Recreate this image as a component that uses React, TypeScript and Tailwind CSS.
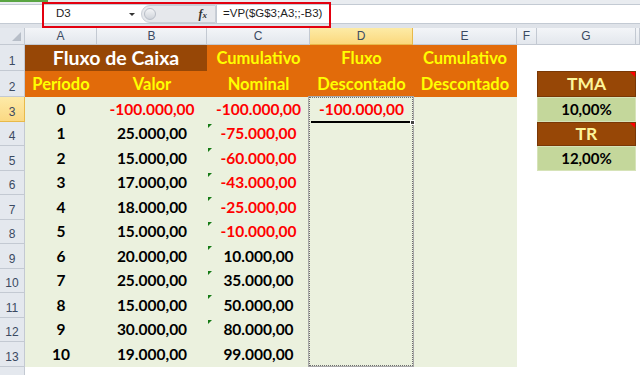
import React from "react";

const RED = "text-[#ff0000]";
const BLK = "text-[#000000]";

const bVals: [string, boolean][] = [
  ["-100.000,00", true],
  ["25.000,00", false],
  ["15.000,00", false],
  ["17.000,00", false],
  ["18.000,00", false],
  ["15.000,00", false],
  ["20.000,00", false],
  ["25.000,00", false],
  ["15.000,00", false],
  ["30.000,00", false],
  ["19.000,00", false],
];
const cVals: [string, boolean][] = [
  ["-100.000,00", true],
  ["-75.000,00", true],
  ["-60.000,00", true],
  ["-43.000,00", true],
  ["-25.000,00", true],
  ["-10.000,00", true],
  ["10.000,00", false],
  ["35.000,00", false],
  ["50.000,00", false],
  ["80.000,00", false],
  ["99.000,00", false],
];

const GRID =
  "grid grid-cols-[25px_72px_110px_103px_103px_104px_20px_99px_1fr] grid-rows-[17px_26px_26px_repeat(11,24.5px)_20px]";

const rowHead =
  "flex items-end justify-center pb-[3px] bg-[#e4e8ee] border-r border-b border-[#c3c9d2] text-[12px] leading-none text-[#3b4a62] font-['Liberation_Sans',Arial,sans-serif]";
const rowHeadSel =
  "flex items-end justify-center pb-[3px] bg-gradient-to-b from-[#fdeaa8] to-[#fbd983] border-r border-b border-[#e8b94a] text-[12px] leading-none text-[#3b4a62] font-['Liberation_Sans',Arial,sans-serif]";
const colHead =
  "flex items-center justify-center bg-gradient-to-b from-[#f3f5f8] to-[#e3e7ed] border-r border-b border-[#c3c9d2] text-[12px] leading-none text-[#3b4a62] font-['Liberation_Sans',Arial,sans-serif]";
const colHeadSel =
  "flex items-center justify-center bg-gradient-to-b from-[#fdeba6] to-[#fbd87c] border-r border-b border-[#e8b94a] text-[12px] leading-none text-[#3b4a62] font-['Liberation_Sans',Arial,sans-serif]";

const dataCell =
  "relative flex items-center justify-center bg-[#ebf1de] text-[15.5px] font-bold";
const hdr =
  "flex items-center justify-center bg-[#e26b0a] text-[#ffff00] text-[16.5px] font-bold";

function GreenMark() {
  return (
    <span className="absolute left-[1px] top-[2px] w-0 h-0 border-t-[4px] border-r-[4px] border-t-[#157a15] border-r-transparent" />
  );
}

function RedMark() {
  return (
    <span className="absolute right-0 top-0 w-0 h-0 border-t-[5px] border-l-[5px] border-t-[#ff0000] border-l-transparent" />
  );
}

export default function App() {
  const rows = [];
  for (let i = 0; i < 11; i++) {
    const r = i + 3;
    const sel = r === 3;
    rows.push(
      <React.Fragment key={r}>
        <div className={sel ? rowHeadSel : rowHead}>{r}</div>
        <div className={`${dataCell} ${BLK}`}>{i}</div>
        <div className={`${dataCell} ${bVals[i][1] ? RED : BLK}`}>{bVals[i][0]}</div>
        <div className={`${dataCell} ${cVals[i][1] ? RED : BLK}`}>
          {i >= 1 && i <= 9 ? <GreenMark /> : null}
          {cVals[i][0]}
        </div>
        <div className={`${dataCell} ${RED}`}>{sel ? "-100.000,00" : ""}</div>
        <div className={dataCell}></div>
        <div className="bg-white"></div>
        {r === 3 ? (
          <div className="flex items-center justify-center bg-[#c4d79b] border border-[#d6e3b8] text-[15px] font-bold text-black">
            10,00%
          </div>
        ) : r === 4 ? (
          <div className="relative flex items-center justify-center bg-[#974706] border border-[#7a3805] text-[17.5px] font-bold text-[#fdf59a]">
            <RedMark />
            TR
          </div>
        ) : r === 5 ? (
          <div className="flex items-center justify-center bg-[#c4d79b] border border-[#d6e3b8] text-[15px] font-bold text-black">
            12,00%
          </div>
        ) : (
          <div className="bg-white"></div>
        )}
        <div className="bg-white"></div>
      </React.Fragment>
    );
  }

  return (
    <div className="relative w-[640px] h-[375px] overflow-hidden bg-white font-['Lato','Open_Sans',sans-serif]">
      {/* formula bar */}
      <div className="h-[28px] flex flex-col bg-[#dfe3e9]">
        <div className="h-[2px] flex bg-[#e9ecf0]">
          <div className="w-[48px] bg-[#5aa543]" />
        </div>
        <div className="h-[2px] bg-[#e9ecf0]" />
        <div className="h-[20px] flex bg-white border-t border-b border-[#c3cad3] font-['Liberation_Sans',Arial,sans-serif] text-[11.5px] text-[#1e1e1e]">
          <div className="w-[141px] flex items-center pl-[56px] pr-[6px]">
            <span className="flex-1">D3</span>
            <span className="w-0 h-0 border-l-[3px] border-r-[3px] border-t-[3px] border-l-transparent border-r-transparent border-t-[#333]" />
          </div>
          <div className="w-[75px] flex items-center bg-[#e6e8ec] rounded-l-full border border-[#c9ced6] pl-[2px] pr-[8px]">
            <span className="w-[12px] h-[12px] rounded-full bg-gradient-to-b from-[#f4f5f7] to-[#cfd3da] border border-[#b8bec7]" />
            <span className="flex-1" />
            <span className="font-['Liberation_Serif',serif] italic font-bold text-[12px] text-[#333]">
              f<span className="text-[9px]">x</span>
            </span>
          </div>
          <div className="flex-1 flex items-center pl-[6px] border-l border-[#c3cad3]">
            =VP($G$3;A3;;-B3)
          </div>
        </div>
        <div className="flex-1" />
      </div>

      {/* sheet: cells grid and overlay grid stacked in one area */}
      <div className="grid">
        <div className={`${GRID} col-start-1 row-start-1`}>
          {/* column headers */}
          <div className="relative bg-[#e4e8ee] border-r border-b border-[#c3c9d2]">
            <span className="absolute right-[3px] bottom-[3px] w-0 h-0 border-b-[9px] border-l-[9px] border-b-[#b7bec8] border-l-transparent" />
          </div>
          <div className={colHead}>A</div>
          <div className={colHead}>B</div>
          <div className={colHead}>C</div>
          <div className={colHeadSel}>D</div>
          <div className={colHead}>E</div>
          <div className={colHead}>F</div>
          <div className={colHead}>G</div>
          <div className={colHead}></div>

          {/* row 1 */}
          <div className={rowHead}>1</div>
          <div className="col-span-2 flex items-center justify-center bg-[#974706] text-white text-[19.5px] font-bold">
            Fluxo de Caixa
          </div>
          <div className={hdr}>Cumulativo</div>
          <div className={hdr}>Fluxo</div>
          <div className={hdr}>Cumulativo</div>
          <div className="bg-white" />
          <div className="bg-white" />
          <div className="bg-white" />

          {/* row 2 */}
          <div className={rowHead}>2</div>
          <div className={hdr}>Período</div>
          <div className={hdr}>Valor</div>
          <div className={hdr}>Nominal</div>
          <div className={hdr}>Descontado</div>
          <div className={hdr}>Descontado</div>
          <div className="bg-white" />
          <div className="relative flex items-center justify-center bg-[#974706] border border-[#7a3805] text-[17.5px] font-bold text-[#fdf59a]">
            <RedMark />
            TMA
          </div>
          <div className="bg-white" />

          {rows}

          {/* row 14 */}
          <div className={rowHead}></div>
          <div className="col-span-8 bg-white" />
        </div>

        <div className={`${GRID} col-start-1 row-start-1 relative z-10 pointer-events-none`}>
          {/* copy marquee on D3:D13 */}
          <div className="col-start-5 row-start-4 row-span-11 -ml-[2px] -mr-[1px] -mt-[1px] border border-[#a8a8a8]">
            <div className="h-full border border-dotted border-[#6e6e6e]" />
          </div>
          {/* active cell bottom edge */}
          <div className="col-start-5 row-start-4 relative">
            <div className="absolute left-[1px] right-[3px] bottom-[-1px] h-[2px] bg-black" />
            <div className="absolute right-[-2px] bottom-[-3px] w-[5px] h-[5px] bg-[#444] border border-white" />
          </div>
        </div>
      </div>

      {/* red annotation box */}
      <div className="absolute left-[42px] top-[2px] w-[289px] h-[26px] border-2 border-[#e3000f] pointer-events-none" />
    </div>
  );
}
